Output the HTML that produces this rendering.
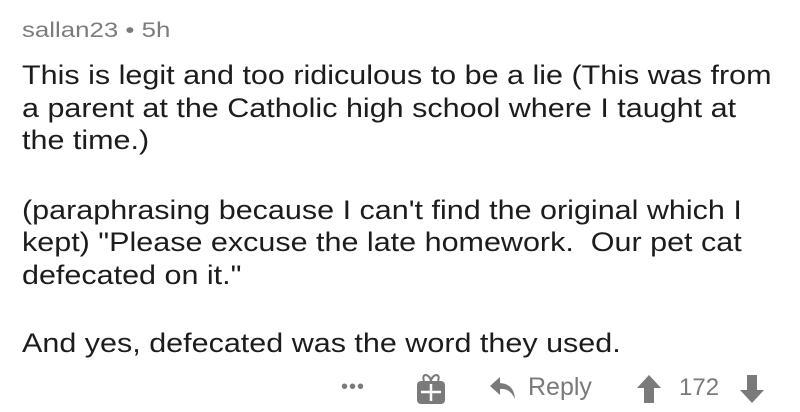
<!DOCTYPE html>
<html><head><meta charset="utf-8"><style>
body{margin:0;width:800px;height:412px;background:#fff;font-family:"Liberation Sans",sans-serif;position:relative;overflow:hidden}
.l{position:absolute;left:22px;font-size:27px;color:#1c1c1c;white-space:nowrap;line-height:32px;transform:scaleX(1.13);transform-origin:0 0}
.h{position:absolute;left:22px;top:19px;font-size:21px;color:#7c7c7c;transform:scaleX(1.23);transform-origin:0 0;white-space:nowrap}
.b{position:absolute;color:#7a7a7a;font-size:23px;top:374px}
</style></head><body>
<div class="h">sallan23 • 5h</div>
<div class="l" style="top:59px">This is legit and too ridiculous to be a lie (This was from</div>
<div class="l" style="top:92px">a parent at the Catholic high school where I taught at</div>
<div class="l" style="top:124px">the time.)</div>
<div class="l" style="top:194px">(paraphrasing because I can't find the original which I</div>
<div class="l" style="top:226px">kept) "Please excuse the late homework.&nbsp; Our pet cat</div>
<div class="l" style="top:259px">defecated on it."</div>
<div class="l" style="top:327px">And yes, defecated was the word they used.</div>
<div class="b" style="left:341px;top:376px;font-size:20px;letter-spacing:1px">•••</div>
<svg style="position:absolute;left:416px;top:373px" width="30" height="32" viewBox="0 0 30 32"><rect x="1" y="8" width="28" height="23" rx="4" fill="#7a7a7a"/><path d="M8 8 Q6 2 10 2 Q14 3 15 8 Q16 3 20 2 Q24 2 22 8" fill="none" stroke="#7a7a7a" stroke-width="2"/><path d="M15 11v17M5 19h20" stroke="#fff" stroke-width="2.5"/></svg>
<svg style="position:absolute;left:489px;top:375px" width="28" height="26" viewBox="0 0 28 26"><path d="M11 2 L1 11 L11 20 V14 Q21 13 26 24 Q25 9 11 8 Z" fill="#7a7a7a"/></svg>
<div class="b" style="left:528px;top:373px;font-size:25px">Reply</div>
<svg style="position:absolute;left:636px;top:374px" width="26" height="30" viewBox="0 0 26 30"><path d="M13 1 L25 14 H18 V29 H8 V14 H1 Z" fill="#7a7a7a"/></svg>
<div class="b" style="left:679px;top:374px;font-size:24px">172</div>
<svg style="position:absolute;left:739px;top:374px" width="26" height="30" viewBox="0 0 26 30"><path d="M13 29 L25 16 H18 V1 H8 V16 H1 Z" fill="#7a7a7a"/></svg>
</body></html>
